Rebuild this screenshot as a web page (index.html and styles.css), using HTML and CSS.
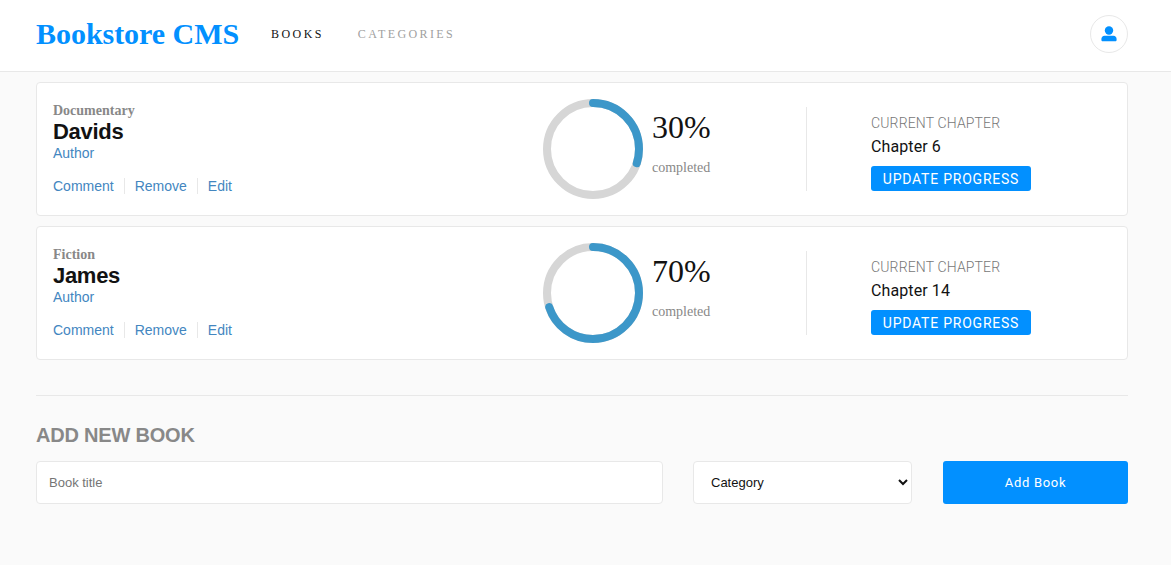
FILE: index.html
```html
<!DOCTYPE html>
<html lang="en">
<head>
    <meta charset="UTF-8">
    <meta name="viewport" content="width=device-width, initial-scale=1.0">
    <title>Bookstore CMS</title>
    <link rel="stylesheet" href="styles.css">
</head>
<body>
<header class="navbar">
    <div class="brand">Bookstore CMS</div>
    <nav class="nav-links">
        <a class="nav-link active" href="#">BOOKS</a>
        <a class="nav-link" href="#">CATEGORIES</a>
    </nav>
    <button class="user-button" type="button" aria-label="User">
        <svg viewBox="0 0 16 16" width="16" height="16">
            <circle cx="8" cy="4.500" r="4.200" fill="#0290ff"/>
            <path fill="#0290ff" d="M3.500 9.800H12.500C14.300 9.800 15.600 11.200 15.600 13V14C15.600 14.800 15 15.300 14.300 15.300H1.700C1 15.300 0.400 14.800 0.400 14V13C0.400 11.200 1.700 9.800 3.500 9.800Z"/>
        </svg>
    </button>
</header>

<main class="container">
    <section class="book-list">
        <article class="book-card">
            <div class="book-info">
                <span class="book-category">Documentary</span>
                <h2 class="book-title">Davids</h2>
                <a class="book-author" href="#">Author</a>
                <div class="book-actions">
                    <a href="#">Comment</a>
                    <a href="#">Remove</a>
                    <a href="#">Edit</a>
                </div>
            </div>
            <div class="book-progress">
                <svg class="ring" viewBox="0 0 100 100" width="100" height="100">
                    <circle class="ring-track" cx="50" cy="50" r="46"/>
                    <circle class="ring-value" cx="50" cy="50" r="46" pathLength="100" stroke-dasharray="30 100"/>
                </svg>
                <div class="progress-text">
                    <div class="percent">30%</div>
                    <div class="completed">completed</div>
                </div>
            </div>
            <div class="book-chapter">
                <div class="chapter-label">CURRENT CHAPTER</div>
                <div class="chapter-name">Chapter 6</div>
                <button class="update-button" type="button">UPDATE PROGRESS</button>
            </div>
        </article>

        <article class="book-card">
            <div class="book-info">
                <span class="book-category">Fiction</span>
                <h2 class="book-title">James</h2>
                <a class="book-author" href="#">Author</a>
                <div class="book-actions">
                    <a href="#">Comment</a>
                    <a href="#">Remove</a>
                    <a href="#">Edit</a>
                </div>
            </div>
            <div class="book-progress">
                <svg class="ring" viewBox="0 0 100 100" width="100" height="100">
                    <circle class="ring-track" cx="50" cy="50" r="46"/>
                    <circle class="ring-value" cx="50" cy="50" r="46" pathLength="100" stroke-dasharray="70 100"/>
                </svg>
                <div class="progress-text">
                    <div class="percent">70%</div>
                    <div class="completed">completed</div>
                </div>
            </div>
            <div class="book-chapter">
                <div class="chapter-label">CURRENT CHAPTER</div>
                <div class="chapter-name">Chapter 14</div>
                <button class="update-button" type="button">UPDATE PROGRESS</button>
            </div>
        </article>
    </section>

    <section class="add-book">
        <h3>ADD NEW BOOK</h3>
        <form class="add-form">
            <input class="title-input" type="text" placeholder="Book title">
            <select class="category-select">
                <option>Category</option>
            </select>
            <button class="add-button" type="button">Add Book</button>
        </form>
    </section>
</main>
</body>
</html>
```

FILE: styles.css
```css
* {
    box-sizing: border-box;
}

body {
    margin: 0;
    height: 565px;
    overflow: hidden;
    background-color: #fafafa;
    font-family: "Liberation Sans", Arial, sans-serif;
}

a {
    text-decoration: none;
}

.navbar {
    display: flex;
    align-items: center;
    height: 72px;
    padding: 0 43px 4px 36px;
    background-color: #fff;
    border-bottom: 1px solid #e8e8e8;
}

.brand {
    font-family: "Liberation Serif", serif;
    font-size: 30px;
    font-weight: bold;
    letter-spacing: -0.04px;
    color: #0290ff;
}

.nav-links {
    display: flex;
    gap: 34px;
    margin: 2px 0 0 32px;
}

.nav-link {
    font-family: "Liberation Serif", serif;
    font-size: 12px;
    letter-spacing: 2.4px;
    color: #a0a0a0;
}

.nav-link.active {
    color: #121212;
}

.user-button {
    display: flex;
    align-items: center;
    justify-content: center;
    width: 38px;
    height: 38px;
    margin-left: auto;
    padding: 0;
    background-color: #fff;
    border: 1px solid #e8e8e8;
    border-radius: 50%;
}

.container {
    padding: 10px 43px 0 36px;
}

.book-list {
    display: flex;
    flex-direction: column;
    gap: 10px;
}

.book-card {
    display: flex;
    height: 134px;
    padding: 16px;
    background-color: #fff;
    border: 1px solid #e8e8e8;
    border-radius: 4px;
}

.book-info {
    display: flex;
    flex-direction: column;
    align-items: flex-start;
    width: 490px;
}

.book-category {
    margin-top: 5px;
    font-family: "Liberation Serif", serif;
    font-size: 14px;
    font-weight: bold;
    line-height: 14px;
    color: #888;
}

.book-title {
    margin: 1px 0 0;
    font-size: 22px;
    line-height: 25px;
    letter-spacing: -0.3px;
    color: #121212;
}

.book-author {
    font-size: 14px;
    line-height: 19px;
    color: #4386bf;
}

.book-actions {
    display: flex;
    margin-top: 15px;
}

.book-actions a {
    padding-right: 10px;
    margin-right: 10px;
    border-right: 1px solid #e8e8e8;
    font-size: 14px;
    line-height: 16px;
    color: #4386bf;
}

.book-actions a:last-child {
    border-right: none;
}

.book-progress {
    display: flex;
    align-items: flex-start;
    gap: 9px;
    width: 264px;
    height: 84px;
    margin-top: 8px;
    border-right: 1px solid #e8e8e8;
}

.ring {
    flex-shrink: 0;
    margin-top: -8px;
    transform: rotate(-90deg);
}

.ring circle {
    fill: none;
    stroke-width: 8;
}

.ring-track {
    stroke: #d6d6d6;
}

.ring-value {
    stroke: #3c97c9;
    stroke-linecap: round;
}

.progress-text {
    font-family: "Liberation Serif", serif;
}

.percent {
    margin-top: 2px;
    font-size: 32px;
    line-height: 37px;
    color: #121212;
}

.completed {
    margin-top: 14px;
    font-size: 14px;
    line-height: 16px;
    color: #888;
}

.book-chapter {
    padding-left: 64px;
    padding-top: 16px;
    font-family: Roboto, sans-serif;
}

.chapter-label {
    font-size: 14px;
    font-weight: 300;
    line-height: 16px;
    letter-spacing: 0.15px;
    color: #777;
}

.chapter-name {
    margin-top: 6px;
    font-size: 16px;
    line-height: 19px;
    letter-spacing: 0.1px;
    color: #121212;
}

.update-button {
    display: block;
    width: 160px;
    height: 25px;
    margin-top: 10px;
    padding: 0;
    background-color: #0290ff;
    border: none;
    border-radius: 3px;
    font-family: Roboto, sans-serif;
    font-size: 14px;
    letter-spacing: 0.77px;
    color: #fff;
}

.add-book {
    margin-top: 35px;
    border-top: 1px solid #e8e8e8;
}

.add-book h3 {
    margin: 28px 0 14px;
    font-size: 20px;
    line-height: 23px;
    letter-spacing: -0.2px;
    color: #888;
}

.add-form {
    display: flex;
    height: 43px;
}

.title-input {
    width: 627px;
    padding: 0 12px;
    background-color: #fff;
    border: 1px solid #e8e8e8;
    border-radius: 4px;
    font-family: "Liberation Sans", Arial, sans-serif;
    font-size: 13px;
}

.title-input::placeholder {
    color: #757575;
}

.category-select {
    width: 219px;
    margin-left: 30px;
    padding: 0 13px;
    background-color: #fff;
    border: 1px solid #e8e8e8;
    border-radius: 4px;
    font-family: "Liberation Sans", Arial, sans-serif;
    font-size: 13px;
    color: #121212;
}

.add-button {
    width: 185px;
    margin-left: 31px;
    background-color: #0290ff;
    border: none;
    border-radius: 3px;
    font-family: Roboto, sans-serif;
    font-size: 13px;
    letter-spacing: 0.7px;
    color: #fff;
}
```
